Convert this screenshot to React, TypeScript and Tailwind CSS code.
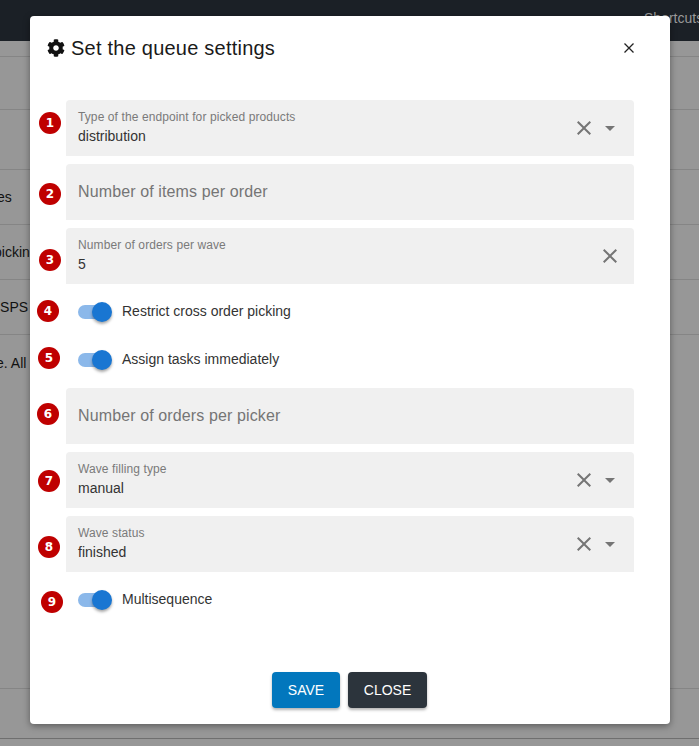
import React from 'react';

const ClearIcon = () => (
  <svg width="24" height="24" viewBox="0 0 24 24" className="fill-[#757575]">
    <path d="M19 6.41 17.59 5 12 10.59 6.41 5 5 6.41 10.59 12 5 17.59 6.41 19 12 13.41 17.59 19 19 17.59 13.41 12z" />
  </svg>
);

const CaretIcon = () => (
  <svg width="24" height="24" viewBox="0 0 24 24" className="fill-[#757575]">
    <path d="M7 10l5 5 5-5z" />
  </svg>
);

const Badge = ({ n, className }: { n: number; className: string }) => (
  <div
    className={`absolute flex h-[22px] w-[22px] items-center justify-center rounded-full bg-[#bf0000] text-[12px] font-bold text-white [font-family:'DejaVu_Sans',sans-serif] ${className}`}
  >
    {n}
  </div>
);

const Field = ({
  label,
  value,
  clear,
  caret,
}: {
  label?: string;
  value?: string;
  clear?: boolean;
  caret?: boolean;
}) => (
  <div className="flex h-14 items-center rounded-t bg-[#f0f0f0] pl-3 pr-3">
    <div className="min-w-0 flex-1">
      {value ? (
        <div className="-mt-[1px]">
          <div className="text-[12px] leading-[14px] tracking-[0.1px] text-[#7a7a7a]">{label}</div>
          <div className="mt-[3px] text-[14px] leading-[18px] text-[#333]">{value}</div>
        </div>
      ) : (
        <div className="text-[16px] tracking-[0.12px] text-[#757575]">{label}</div>
      )}
    </div>
    {clear && <ClearIcon />}
    {caret && (
      <div className="ml-[2px]">
        <CaretIcon />
      </div>
    )}
  </div>
);

const Toggle = ({ label }: { label: string }) => (
  <div className="flex h-10 items-center pl-3">
    <div className="relative h-[14px] w-[33px] rounded-full bg-[#8bb8ea]">
      <div className="absolute right-[-1px] top-[-3px] h-5 w-5 rounded-full bg-[#1976d2] shadow-[0_2px_3px_rgba(0,0,0,0.35)]" />
    </div>
    <div className="ml-[11px] -mt-[1px] text-[14px] text-[#333]">{label}</div>
  </div>
);

const BgRow = ({ text, h, inset }: { text?: string; h: string; inset?: string }) => (
  <div className={`flex items-center whitespace-nowrap border-b border-[#858585] text-[14px] text-[#111] ${h}`}>
    <span className={inset}>{text}</span>
  </div>
);

export default function App() {
  return (
    <div className="relative h-[746px] w-[699px] overflow-hidden bg-[#979797] [font-family:'Liberation_Sans',Arial,sans-serif]">
      <div className="flex h-[41px] items-start bg-[#1b2026] pl-[644px] pt-[8px] text-[14px] text-[#9a9a9a]">
        <span>Shortcuts</span>
      </div>
      <div className="flex flex-col">
        <BgRow h="h-[16px]" />
        <BgRow h="h-[53px]" />
        <BgRow h="h-[60px]" />
        <BgRow h="h-[55px]" text="es" inset="-ml-[3px]" />
        <BgRow h="h-[55px]" text="picking" inset="-ml-[6px]" />
        <BgRow h="h-[55px]" text="USPS" inset="-ml-[10px]" />
        <div className="flex h-[354px] items-start whitespace-nowrap border-b border-[#858585] pt-[18px] text-[14px] text-[#111]">
          <span className="-ml-[4px]">e. All</span>
        </div>
        <div className="h-[50px] border-b border-[#6f6f6f]" />
      </div>

      <div className="absolute left-[30px] top-[16px] flex h-[708px] w-[640px] flex-col rounded bg-white shadow-[0_2px_7px_rgba(0,0,0,0.4)]">
        <div className="flex h-[64px] items-center pl-[17px] pr-[35px]">
          <svg width="18" height="18" viewBox="0 0 512 512" className="fill-[#111]">
            <path d="M487.4 315.7l-42.6-24.6c4.3-23.2 4.3-47 0-70.2l42.6-24.6c4.9-2.8 7.1-8.6 5.5-14-11.1-35.6-30-67.8-54.7-94.6-3.8-4.1-10-5.1-14.8-2.3L380.8 110c-17.9-15.4-38.5-27.3-60.8-35.1V25.8c0-5.6-3.9-10.5-9.4-11.7-36.7-8.2-74.3-7.8-109.2 0-5.5 1.2-9.4 6.1-9.4 11.7V75c-22.2 7.9-42.8 19.8-60.8 35.1L88.7 85.5c-4.9-2.8-11-1.9-14.8 2.3-24.7 26.7-43.6 58.9-54.7 94.6-1.7 5.4.6 11.2 5.5 14L67.3 221c-4.3 23.2-4.3 47 0 70.2l-42.6 24.6c-4.9 2.8-7.1 8.6-5.5 14 11.1 35.6 30 67.8 54.7 94.6 3.8 4.1 10 5.1 14.8 2.3l42.6-24.6c17.9 15.4 38.5 27.3 60.8 35.1v49.2c0 5.6 3.9 10.5 9.4 11.7 36.7 8.2 74.3 7.8 109.2 0 5.5-1.2 9.4-6.1 9.4-11.7v-49.2c22.2-7.9 42.8-19.8 60.8-35.1l42.6 24.6c4.9 2.8 11 1.9 14.8-2.3 24.7-26.7 43.6-58.9 54.7-94.6 1.5-5.5-.7-11.3-5.6-14.1zM256 336c-44.1 0-80-35.9-80-80s35.9-80 80-80 80 35.9 80 80-35.9 80-80 80z" />
          </svg>
          <div className="ml-[6px] flex-1 text-[20px] tracking-[0.23px] text-[#1a1a1a]">Set the queue settings</div>
          <svg width="12" height="12" viewBox="0 0 12 12" className="stroke-[#222]" strokeWidth="1.3">
            <path d="M1.5 1.5l9 9M10.5 1.5l-9 9" />
          </svg>
        </div>

        <div className="relative flex flex-1 flex-col pl-9 pr-9 pt-5">
          <Badge n={1} className="left-[9px] top-[32px]" />
          <Field label="Type of the endpoint for picked products" value="distribution" clear caret />
          <Badge n={2} className="left-[9px] top-[103px]" />
          <div className="mt-2">
            <Field label="Number of items per order" />
          </div>
          <Badge n={3} className="left-[9px] top-[169px]" />
          <div className="mt-2">
            <Field label="Number of orders per wave" value="5" clear />
          </div>
          <Badge n={4} className="left-[7px] top-[220px]" />
          <div className="mt-2">
            <Toggle label="Restrict cross order picking" />
          </div>
          <Badge n={5} className="left-[8px] top-[267px]" />
          <div className="mt-2">
            <Toggle label="Assign tasks immediately" />
          </div>
          <Badge n={6} className="left-[7px] top-[323px]" />
          <div className="mt-2">
            <Field label="Number of orders per picker" />
          </div>
          <Badge n={7} className="left-[8px] top-[390px]" />
          <div className="mt-2">
            <Field label="Wave filling type" value="manual" clear caret />
          </div>
          <Badge n={8} className="left-[8px] top-[456px]" />
          <div className="mt-2">
            <Field label="Wave status" value="finished" clear caret />
          </div>
          <Badge n={9} className="left-[11px] top-[511px]" />
          <div className="mt-2">
            <Toggle label="Multisequence" />
          </div>
        </div>

        <div className="flex justify-center gap-2 pb-4 pr-[1px]">
          <button className="h-9 w-[68px] rounded bg-[#0277bd] text-[14px] text-white shadow-[0_2px_3px_rgba(0,0,0,0.3)]">
            SAVE
          </button>
          <button className="h-9 w-[79px] rounded bg-[#2c343c] text-[14px] text-white shadow-[0_2px_3px_rgba(0,0,0,0.3)]">
            CLOSE
          </button>
        </div>
      </div>
    </div>
  );
}
